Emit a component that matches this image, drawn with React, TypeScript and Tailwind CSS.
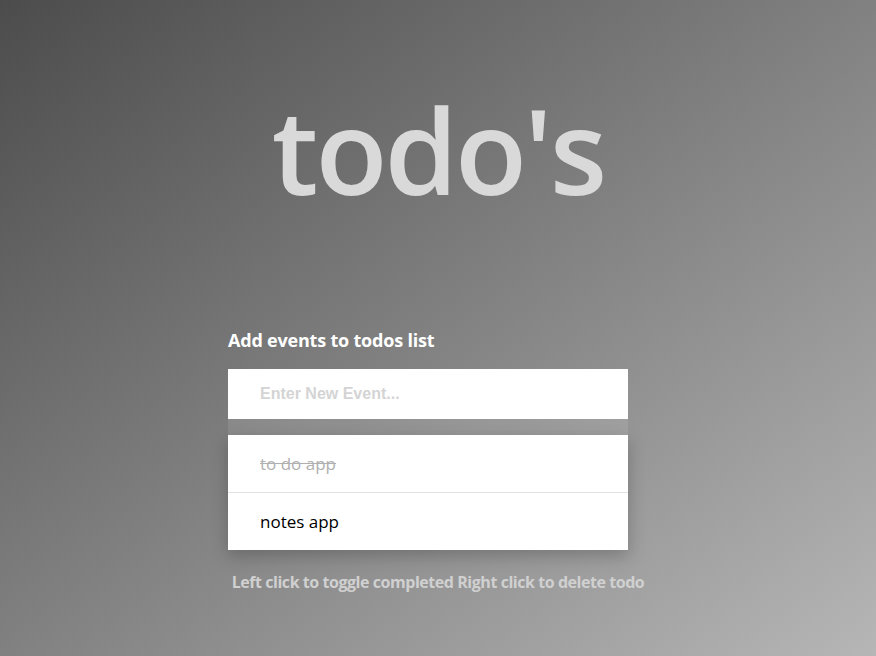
import React from "react";

export default function App() {
  return (
    <div
      className="w-[876px] h-[656px] overflow-hidden bg-[linear-gradient(to_bottom_right,#4c4c4c,#b6b6b6)] flex flex-col items-center"
      style={{ fontFamily: '"Open Sans", "Noto Sans", sans-serif' }}
    >
      <h1 className="mt-[80px] h-[140px] leading-[140px] text-[118px] font-semibold text-[#d9d9d9] tracking-[-3px] ml-[0px]">
        todo's
      </h1>
      <div className="mt-[108px] w-[400px] ml-[-20px] flex flex-col">
        <div className="text-[18px] font-bold text-white leading-[24px] tracking-[-0.2px]">
          Add events to todos list
        </div>
        <div className="mt-[17px] bg-white h-[50px] flex items-center pl-[32px]">
          <span
            className="text-[16px] font-bold text-[#d4d4d4]"
            style={{ fontFamily: '"Liberation Sans", Arial, sans-serif' }}
          >
            Enter New Event...
          </span>
        </div>
        <div className="h-[16px] bg-white/10" />
        <ul className="bg-white shadow-[0_6px_16px_rgba(0,0,0,0.22)]">
          <li className="h-[58px] flex items-center pl-[32px] border-b border-[#e2e2e2] text-[17px] text-[#b0b0b0] line-through">
            to do app
          </li>
          <li className="h-[57px] flex items-center pl-[32px] text-[17px] text-black">
            notes app
          </li>
        </ul>
      </div>
      <div className="mt-[20px] text-[16px] font-bold text-[#d0d0d0] tracking-[-0.45px]">
        Left click to toggle completed Right click to delete todo
      </div>
    </div>
  );
}
